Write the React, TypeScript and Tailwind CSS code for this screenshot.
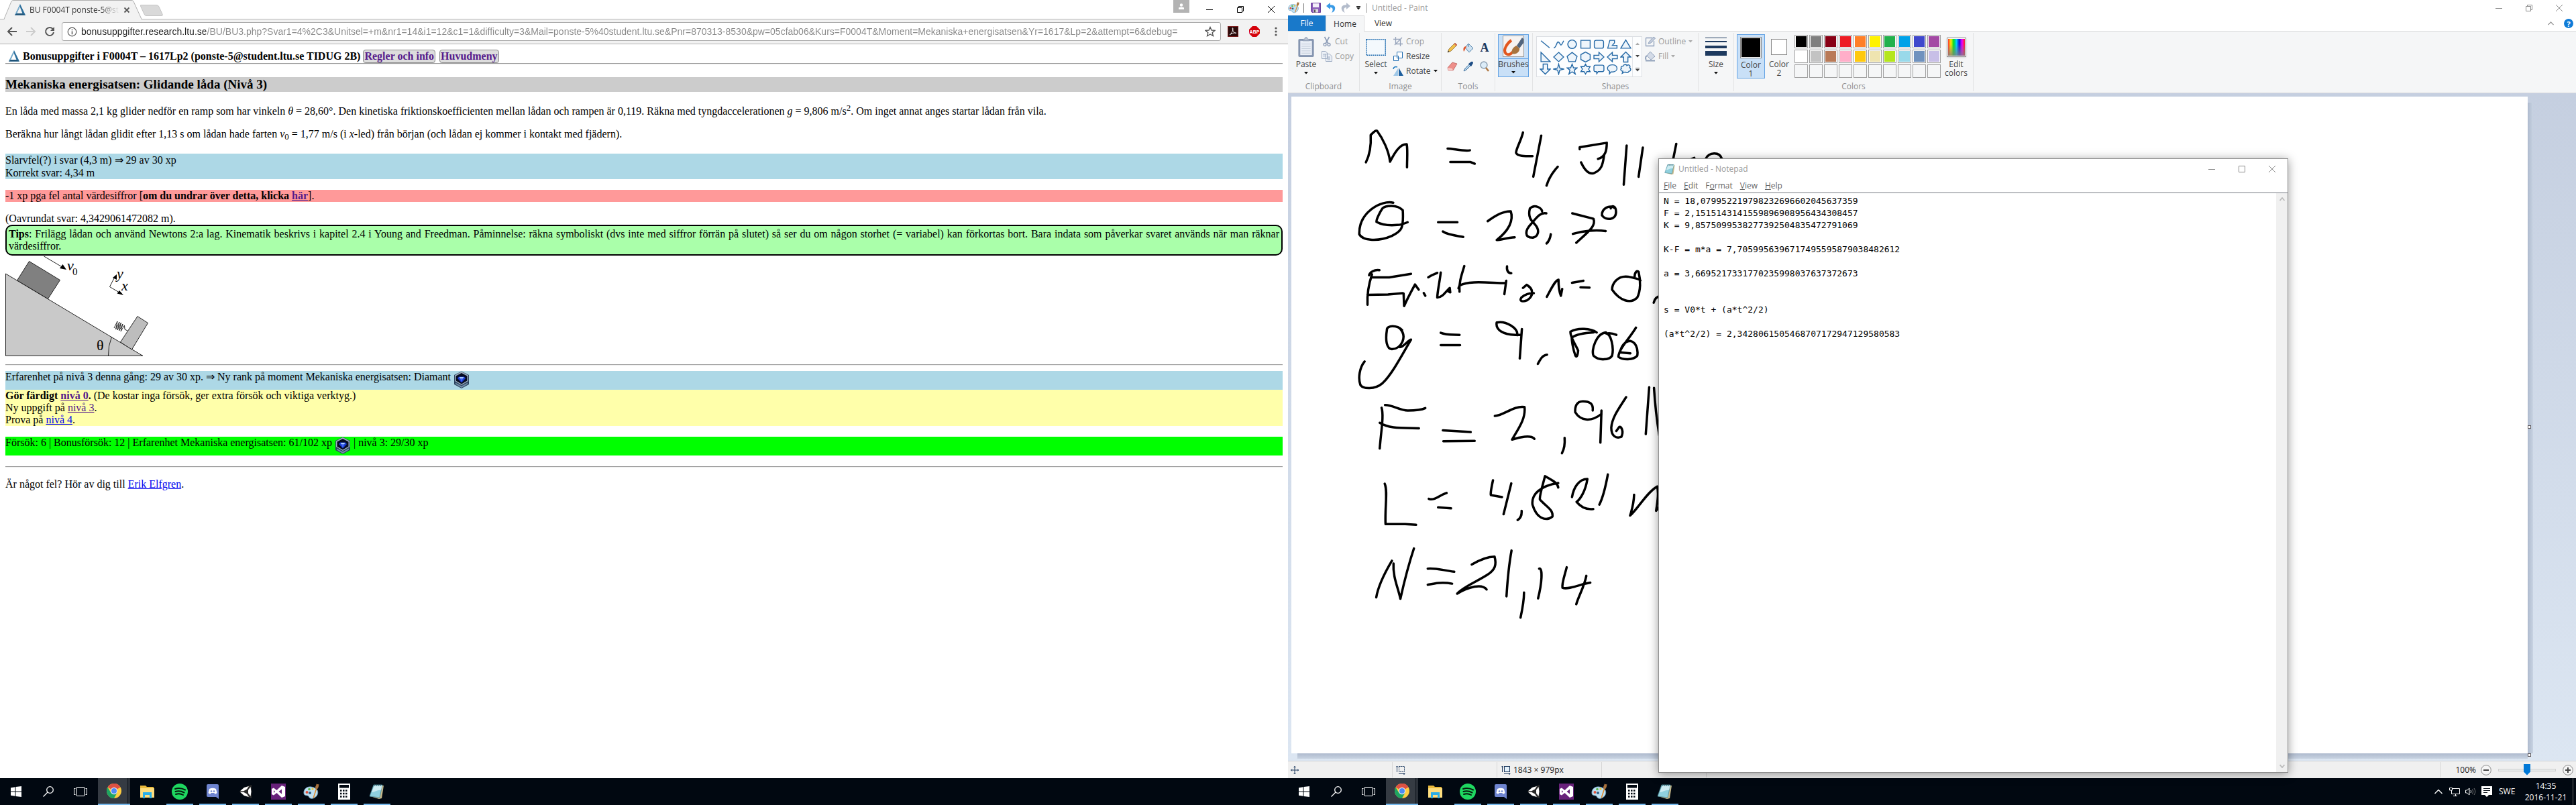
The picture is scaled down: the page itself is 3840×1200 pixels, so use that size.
import type { ReactNode } from "react";

const SERIF = "font-['Liberation_Serif','Times_New_Roman',serif]";
const UI = "font-['Open_Sans','Segoe_UI',sans-serif]";

/* ---------- shared icons ---------- */

function LtuLogo() {
  return (
    <svg viewBox="0 0 16 17" className="h-[17px] w-4 shrink-0" aria-hidden="true">
      <path d="M8 0 L16 16.5 L0 16.5 Z M7.6 4 L3 14 L11.5 14 Z" fill="#2d6f9c" fillRule="evenodd" />
      <path d="M8 0 L0 16.5 L3 14 L7.6 4 Z" fill="#7fb2d2" />
      <path d="M0 16.5 L3 14 L11.5 14 L16 16.5 Z" fill="#1f5378" />
    </svg>
  );
}

function RankIcon() {
  return (
    <svg viewBox="0 0 24 26" className="h-[26px] w-6" role="img" aria-label="Diamant">
      <path d="M12 0.500 L23 6 V20 L12 26 L1 20 V6 Z" fill="#2d4560" />
      <path d="M12 1 L22 6.500 V15 L12 21 L2 15 V6.500 Z" fill="#a3b3c4" />
      <path d="M12 3 L20.500 7.500 V14.500 L12 19.500 L3.500 14.500 V7.500 Z" fill="#070d22" />
      <path d="M8 8.500 H16 L18 11 L12 17.500 L6 11 Z" fill="#1a3ad0" />
      <path d="M8.500 9 H15.500 L14 11.500 H10 Z" fill="#a9ccff" />
      <path d="M10 11.500 H14 L12 16.500 Z" fill="#4368f5" />
      <path d="M3 17.500 L12 22.500 L21 17.500 V19.500 L12 25 L3 19.500 Z" fill="#7590aa" />
    </svg>
  );
}

function PaletteIcon({ className }: { className: string }) {
  return (
    <svg viewBox="0 0 24 24" className={className} aria-hidden="true">
      <path d="M12 5 C5 4 0 9 1 15 C2 19 6 17 8 19 C9 22 12 23 15 22 C21 20 23 14 21 10 C19 7 16 5.500 12 5 Z" fill="#bfe0f2" stroke="#5f94b5" strokeWidth="0.8" />
      <circle cx="5.500" cy="13" r="2" fill="#e0523c" />
      <circle cx="9" cy="8.500" r="1.800" fill="#5bb450" />
      <circle cx="14" cy="8" r="1.600" fill="#f0c63a" />
      <circle cx="10" cy="14" r="2" fill="#2f5f88" />
      <path d="M14.500 21 L19 7 L20.500 7.500 L16 21.500 Z" fill="#e08a2c" />
      <path d="M18.500 7.500 C17 4 20 3 19.500 0.500 C21 1 22 1.500 23.500 1 C23 4 23 6 21 8.200 Z" fill="#a9713c" />
    </svg>
  );
}

function NotepadIcon({ className }: { className: string }) {
  return (
    <svg viewBox="0 0 24 24" className={className} aria-hidden="true">
      <path d="M8 3 H22 L19 22 L15 23 L2 19 Z" fill="#c8b98a" />
      <path d="M7 2 H20 L16 21 L1 19 Z" fill="#8fd0de" stroke="#4b8896" strokeWidth="0.800" />
      <path d="M8 3 H19.500 L18 10 C13 9 9 13 4 13 Z" fill="#cdebf1" />
      <path d="M8 1.500 V4 M11 1.500 V4 M14 1.500 V4 M17 1.500 V4" stroke="#2e5963" strokeWidth="1" />
    </svg>
  );
}

function Caret({ color = "#111" }: { color?: string }) {
  return (
    <svg viewBox="0 0 6 4" className="h-1 w-1.5 shrink-0" aria-hidden="true">
      <path d="M0 0 H6 L3 3.500 Z" fill={color} />
    </svg>
  );
}

/* ---------- Chrome ---------- */

function BrowserChrome() {
  return (
    <header className={`${UI} text-[13px]`}>
      <div className="relative flex h-[29px] items-start justify-between border-b border-[#b4b4b4] bg-white">
        <svg viewBox="0 0 246 29" className="absolute left-0 top-0 h-[29px] w-[246px]" aria-hidden="true">
          <path d="M6 28.500 L17 2 Q18 0.500 20 0.500 H196 Q198 0.500 199 2 L211 28.500" fill="#f2f2f2" stroke="#b0b0b0" />
          <path d="M7 28 H210 V29 H7 Z" fill="#f2f2f2" />
          <path d="M210 7.500 H233 Q236 7.500 237 10 L242 21 Q243 23.500 241 23.500 H218 Q216 23.500 215 21 L209.500 9 Q209 7.500 210 7.500" fill="#d9d9d9" stroke="#c4c4c4" />
        </svg>
        <div className="relative ml-[22px] flex h-[29px] items-center">
          <LtuLogo />
          <span className="ml-1.5 w-[134px] overflow-hidden whitespace-nowrap bg-gradient-to-r from-[#333] from-80% to-transparent bg-clip-text text-[12px] text-transparent">
            BU F0004T ponste-5@stu
          </span>
          <button className="ml-1.5" aria-label="Close tab">
            <svg viewBox="0 0 10 10" className="h-2.5 w-2.5">
              <path d="M1.500 1.500 L8.500 8.500 M8.500 1.500 L1.500 8.500" stroke="#555" strokeWidth="1.800" />
            </svg>
          </button>
        </div>
        <div className="flex items-start">
          <button className="mr-[7px] flex h-[19px] w-6 items-center justify-center bg-[#b3b3b3]" aria-label="Profile">
            <svg viewBox="0 0 8 10" className="h-2.5 w-2">
              <circle cx="4" cy="2.500" r="2.200" fill="#fff" />
              <path d="M0 9 V7 Q0 5.500 4 5.500 Q8 5.500 8 7 V9 Z" fill="#fff" />
            </svg>
          </button>
          <button className="flex h-[27px] w-[46px] items-center justify-center" aria-label="Minimize">
            <svg viewBox="0 0 10 10" className="h-2.5 w-2.5"><path d="M0 5.500 H10" stroke="#000" /></svg>
          </button>
          <button className="flex h-[27px] w-[46px] items-center justify-center" aria-label="Restore">
            <svg viewBox="0 0 10 10" className="h-2.5 w-2.5"><path d="M0.500 2.500 H7.500 V9.500 H0.500 Z M2.500 2.500 V0.500 H9.500 V7.500 H7.500" fill="none" stroke="#000" /></svg>
          </button>
          <button className="mr-0.5 flex h-[27px] w-[46px] items-center justify-center" aria-label="Close">
            <svg viewBox="0 0 10 10" className="h-2.5 w-2.5"><path d="M0 0 L10 10 M10 0 L0 10" stroke="#000" /></svg>
          </button>
        </div>
      </div>
      <div className="flex h-[37px] items-center border-b border-[#b0b0b0] bg-[#f2f2f2] pl-2.5">
        <button className="flex w-4 justify-center" aria-label="Back">
          <svg viewBox="0 0 16 16" className="h-4 w-4"><path d="M15 8 H2 M8 2 L2 8 L8 14" fill="none" stroke="#555" strokeWidth="2" /></svg>
        </button>
        <button className="ml-3 flex w-4 justify-center" aria-label="Forward">
          <svg viewBox="0 0 16 16" className="h-4 w-4"><path d="M1 8 H14 M8 2 L14 8 L8 14" fill="none" stroke="#ccc" strokeWidth="2" /></svg>
        </button>
        <button className="ml-3 flex w-4 justify-center" aria-label="Reload">
          <svg viewBox="0 0 16 16" className="h-4 w-4">
            <path d="M13 4.500 A6 6 0 1 0 14 9" fill="none" stroke="#555" strokeWidth="2" />
            <path d="M15 1 V7 H9 Z" fill="#555" />
          </svg>
        </button>
        <div className="ml-2.5 flex h-7 min-w-0 flex-1 items-center rounded-[3px] border border-[#a8a8a8] bg-white pl-[7px] pr-[7px]">
          <svg viewBox="0 0 16 16" className="h-[15px] w-[15px] shrink-0" aria-hidden="true">
            <circle cx="8" cy="8" r="6.700" fill="none" stroke="#555" strokeWidth="1.300" />
            <path d="M8 7 V12 M8 4 V5.600" stroke="#555" strokeWidth="1.600" />
          </svg>
          <input
            aria-label="Address"
            className="ml-1.5 min-w-0 flex-1 bg-[linear-gradient(to_right,#222_186px,#888_186px)] bg-clip-text font-['Liberation_Sans',sans-serif] text-[14px] text-transparent outline-none"
            defaultValue="bonusuppgifter.research.ltu.se/BU/BU3.php?Svar1=4%2C3&Unitsel=+m&nr1=14&i1=12&c1=1&difficulty=3&Mail=ponste-5%40student.ltu.se&Pnr=870313-8530&pw=05cfab06&Kurs=F0004T&Moment=Mekaniska+energisatsen&Yr=1617&Lp=2&attempt=6&debug="
          />
          <button aria-label="Bookmark">
            <svg viewBox="0 0 16 16" className="h-4 w-4">
              <path d="M8 1.500 L10 6 L15 6.400 L11.200 9.700 L12.400 14.500 L8 12 L3.600 14.500 L4.800 9.700 L1 6.400 L6 6 Z" fill="none" stroke="#555" strokeWidth="1.400" />
            </svg>
          </button>
        </div>
        <button className="ml-2.5" aria-label="Adobe Acrobat">
          <svg viewBox="0 0 16 16" className="h-4 w-4">
            <rect x="0.500" y="0.500" width="15" height="15" fill="#2a0a0a" stroke="#7a1c1c" />
            <path d="M3 13 C6 11 8.500 6 7.800 3 C7.500 2 7 3 7.500 5 C8.500 9 11 11 13 10.500 C12 9 7 10 3 13" fill="none" stroke="#eee" />
          </svg>
        </button>
        <button className="ml-4" aria-label="Adblock Plus">
          <svg viewBox="0 0 16 16" className="h-4 w-4">
            <path d="M5 0 H11 L16 5 V11 L11 16 H5 L0 11 V5 Z" fill="#d4020b" />
            <text x="8" y="10.500" textAnchor="middle" fontSize="7" fontWeight="700" fill="#fff" fontFamily="Liberation Sans">ABP</text>
          </svg>
        </button>
        <button className="ml-4 mr-2.5 flex w-4 justify-center" aria-label="Menu">
          <svg viewBox="0 0 4 14" className="h-3.5 w-1">
            <circle cx="2" cy="2" r="1.600" fill="#555" /><circle cx="2" cy="7" r="1.600" fill="#555" /><circle cx="2" cy="12" r="1.600" fill="#555" />
          </svg>
        </button>
      </div>
    </header>
  );
}

function RampFigure() {
  return (
    <svg viewBox="8 381 216 152" className="block h-[152px] w-[216px]" role="img" aria-label="Låda på ramp med vinkel θ" fontFamily="Liberation Serif">
      <g stroke="#222" strokeWidth="1">
        <path d="M8.500 408 L213 530.500 H8.500 Z" fill="#c9c9c9" />
        <path d="M43.500 389.500 L89.500 417.500 L71.500 445.500 L25.500 418 Z" fill="#808080" />
        <path d="M205 471.500 L220.500 481.500 L196.500 521 L179.500 510 Z" fill="#bdbdbd" />
        <path d="M65.500 382 L96 400 M163.500 427.500 L172 411 M163.500 427.500 L182 438.500 M166.500 502 Q161 516 161.500 530" fill="none" />
        <path d="M170 489 L175 479 L172.500 491 L178 480 L175 492 L180.500 481 L177.500 493 L183 483 L180 494 L185.500 485 L186 491 L190 493" fill="none" />
      </g>
      <path d="M99 402 L89 400 L93.500 394 Z M174 409 L174 417 L168 414 Z M184 440 L174.500 437.500 L178 433 Z" fill="#000" />
      <g fontStyle="italic" fontSize="22" fill="#000">
        <text x="100" y="403">v</text>
        <text x="174" y="415">y</text>
        <text x="181" y="433">x</text>
      </g>
      <text x="108" y="410" fontSize="15">0</text>
      <text x="144" y="522" fontSize="22">θ</text>
    </svg>
  );
}

function Rule() {
  return <hr className="h-0.5 border-b border-t border-b-[#eee] border-t-[#9a9a9a]" />;
}

function BonusPage() {
  return (
    <main className={`${SERIF} min-h-0 flex-1 overflow-hidden bg-white px-2 pt-[7px] text-[16px] leading-[18px] text-black`}>
      <h1 className="flex h-[21px] items-center pl-[5px] text-[16px] font-bold">
        <LtuLogo />
        <span className="ml-[5px]">Bonusuppgifter i F0004T – 1617Lp2 (ponste-5@student.ltu.se TIDUG 2B)</span>
        <a href="#regler" className="ml-1 rounded-[4px] border border-[#888] bg-[#ddd] px-px leading-[18px] text-[#551a8b]">Regler och info</a>
        <a href="#meny" className="ml-1.5 rounded-[4px] border border-[#888] bg-[#ddd] px-px leading-[18px] text-[#551a8b]">Huvudmeny</a>
      </h1>
      <Rule />
      <h2 className="mt-[19px] bg-[#ccc] text-[19px] font-bold leading-[22px]">Mekaniska energisatsen: Glidande låda (Nivå 3)</h2>
      <p className="mt-5">
        En låda med massa 2,1 kg glider nedför en ramp som har vinkeln <i>θ</i> = 28,60°. Den kinetiska friktionskoefficienten mellan lådan och rampen är 0,119. Räkna med
        tyngdaccelerationen <i>g</i> = 9,806 m/s<sup className="text-[13px] leading-none">2</sup>. Om inget annat anges startar lådan från vila.
      </p>
      <p className="mt-4">
        Beräkna hur långt lådan glidit efter 1,13 s om lådan hade farten <i>v</i><sub className="text-[13px] leading-none">0</sub> = 1,77 m/s (i <i>x</i>-led) från början (och lådan ej kommer i kontakt med fjädern).
      </p>
      <div className="mt-5 bg-[#add8e6] leading-[19px]">
        <p>Slarvfel(?) i svar (4,3 m) ⇒ 29 av 30 xp</p>
        <p>Korrekt svar: 4,34 m</p>
      </div>
      <p className="mt-4 bg-[#f99]">
        -1 xp pga fel antal värdesiffror [<b>om du undrar över detta, klicka <a href="#har" className="text-[#551a8b] underline">här</a></b>].
      </p>
      <p className="mt-4">(Oavrundat svar: 4,3429061472082 m).</p>
      <p className="rounded-[10px] border-2 border-black bg-[#afa] p-[3px] text-justify">
        <b>Tips</b>: Frilägg lådan och använd Newtons 2:a lag. Kinematik beskrivs i kapitel 2.4 i Young and Freedman. Påminnelse: räkna symboliskt (dvs inte med siffror förrän på slutet) så ser du om någon storhet (= variabel) kan förkortas bort. Bara indata som påverkar svaret används när man räknar värdesiffror.
      </p>
      <RampFigure />
      <div className="h-2.5" />
      <Rule />
      <div className="mt-2 flex h-7 items-start bg-[#add8e6]">
        <span>Erfarenhet på nivå 3 denna gång: 29 av 30 xp. ⇒ Ny rank på moment Mekaniska energisatsen: Diamant</span>
        <span className="ml-1"><RankIcon /></span>
      </div>
      <div className="bg-[#ffa]">
        <p><b>Gör färdigt <a href="#niva0" className="text-[#551a8b] underline">nivå 0</a>.</b> (De kostar inga försök, ger extra försök och viktiga verktyg.)</p>
        <p>Ny uppgift på <a href="#niva3" className="text-[#551a8b] underline">nivå 3</a>.</p>
        <p>Prova på <a href="#niva4" className="text-[#00e] underline">nivå 4</a>.</p>
      </div>
      <div className="mt-4 flex h-7 items-start bg-[#0f0]">
        <span>Försök: 6 | Bonusförsök: 12 | Erfarenhet Mekaniska energisatsen: 61/102 xp</span>
        <span className="mx-1"><RankIcon /></span>
        <span>| nivå 3: 29/30 xp</span>
      </div>
      <div className="h-4" />
      <Rule />
      <p className="mt-4">Är något fel? Hör av dig till <a href="#erik" className="text-[#00e] underline">Erik Elfgren</a>.</p>
    </main>
  );
}

/* ---------- Paint ---------- */

function PaintTitle() {
  return (
    <div className="flex h-[23px] items-center justify-between bg-white">
      <div className="flex items-center">
        <PaletteIcon className="h-[17px] w-[17px]" />
        <span className="ml-1.5 h-3.5 w-px bg-[#777]" />
        <button className="ml-2.5" aria-label="Save">
          <svg viewBox="0 0 15 15" className="h-[15px] w-[15px]">
            <path d="M0.500 0.500 H14.500 V14.500 H2 L0.500 13 Z" fill="#8a5cb8" stroke="#6a3f98" />
            <rect x="3" y="1" width="9" height="6" fill="#f3eef8" /><rect x="4" y="9.500" width="7" height="5" fill="#ddd" /><rect x="5" y="10.500" width="2" height="4" fill="#555" />
          </svg>
        </button>
        <button className="ml-2" aria-label="Undo">
          <svg viewBox="0 0 15 15" className="h-[15px] w-[15px]">
            <path d="M0 5 L6 0 V3.200 C12 3 14 6 13 10 C12.500 12 11 14 8 15 C10.500 11.500 10.500 7 6 7 V10 Z" fill="#3a9be6" />
          </svg>
        </button>
        <button className="ml-1.5" aria-label="Redo">
          <svg viewBox="0 0 15 15" className="h-[15px] w-[15px]">
            <path d="M15 5 L9 0 V3.200 C3 3 1 6 2 10 C2.500 12 4 14 7 15 C4.500 11.500 4.500 7 9 7 V10 Z" fill="#b3bccb" />
          </svg>
        </button>
        <button className="ml-2 flex w-2 flex-col items-center gap-px" aria-label="Customize toolbar">
          <span className="h-px w-1.5 bg-black" />
          <Caret />
        </button>
        <span className="ml-2 h-3.5 w-px bg-[#999]" />
        <span className="ml-[7px] text-[#999]">Untitled - Paint</span>
      </div>
      <div className="flex">
        <button className="flex w-[45px] items-center justify-center" aria-label="Minimize">
          <svg viewBox="0 0 10 10" className="h-2.5 w-2.5"><path d="M0 5.500 H10" stroke="#888" /></svg>
        </button>
        <button className="flex w-[45px] items-center justify-center" aria-label="Restore">
          <svg viewBox="0 0 10 10" className="h-2.5 w-2.5"><path d="M0.500 2.500 H7.500 V9.500 H0.500 Z M2.500 2.500 V0.500 H9.500 V7.500 H7.500" fill="none" stroke="#888" /></svg>
        </button>
        <button className="mr-0.5 flex w-[46px] items-center justify-center" aria-label="Close">
          <svg viewBox="0 0 10 10" className="h-2.5 w-2.5"><path d="M0 0 L10 10 M10 0 L0 10" stroke="#888" /></svg>
        </button>
      </div>
    </div>
  );
}

function PaintTabs() {
  return (
    <div className="relative z-10 -mb-px flex h-6 items-stretch">
      <button className="mb-px w-14 bg-[#1979ca] text-white">File</button>
      <button className="w-[58px] border border-b-0 border-[#dadbdc] bg-[#f5f6f7] text-[#333]">Home</button>
      <button className="w-[56px] text-[#333]">View</button>
      <div className="ml-auto flex items-center gap-[15px] pr-1">
        <button aria-label="Collapse ribbon">
          <svg viewBox="0 0 9 6" className="h-1.5 w-[9px]"><path d="M0.500 5 L4.500 1 L8.500 5" fill="none" stroke="#999" strokeWidth="1.300" /></svg>
        </button>
        <button aria-label="Help" className="flex h-3.5 w-3.5 items-center justify-center rounded-full bg-[#0f7bd7] text-[11px] font-bold leading-none text-white">?</button>
      </div>
    </div>
  );
}

function Group({ label, className, children }: { label: string; className: string; children: ReactNode }) {
  return (
    <section aria-label={label || "Brushes"} className={`flex h-[87px] shrink-0 flex-col border-r border-[#e2e3e4] ${className}`}>
      <div className="flex h-[72px] items-start pt-0.5">{children}</div>
      <div className="text-center leading-[15px] text-[#8f8f8f]">{label}</div>
    </section>
  );
}

function Big({ icon, label, second, className }: { icon: ReactNode; label: string; second?: string; className: string }) {
  return (
    <button className={`flex h-[66px] shrink-0 flex-col items-center leading-[13px] text-[#444] ${className}`}>
      <span className="flex h-[38px] items-center justify-center">{icon}</span>
      <span>{label}</span>
      <span className="flex h-[13px] items-center">{second ?? <Caret />}</span>
    </button>
  );
}

function Small({ icon, label, dim, caret }: { icon: ReactNode; label: string; dim?: boolean; caret?: boolean }) {
  return (
    <button className={`flex h-[22px] items-center whitespace-nowrap ${dim ? "text-[#9a9a9a]" : "text-[#444]"}`}>
      <span className="mr-1 flex w-4 justify-center">{icon}</span>
      {label}
      {caret && <span className="ml-1"><Caret color={dim ? "#aaa" : "#111"} /></span>}
    </button>
  );
}

const SHAPES = [
  "M2 3 L14 13",
  "M1 13 C5 13 5 3 8 5 S10 14 15 3",
  "M8 2 A6 6 0 1 0 8.010 2 Z",
  "M1.500 2.500 H14.500 V13.500 H1.500 Z",
  "M4 2.500 H12 Q14.500 2.500 14.500 5 V11 Q14.500 13.500 12 13.500 H4 Q1.500 13.500 1.500 11 V5 Q1.500 2.500 4 2.500 Z",
  "M1.500 13.500 L4.500 2.500 H11 V6 L8 9.500 H14.500 V13.500 Z",
  "M8 2 L15 13.500 H1 Z",
  "M2 1.500 L15 14.500 H2 Z",
  "M8 1.500 L15 8 L8 14.500 L1 8 Z",
  "M8 1.500 L15 7 L12.500 14.500 H3.500 L1 7 Z",
  "M8 1 L14.500 4.500 V11.500 L8 15 L1.500 11.500 V4.500 Z",
  "M1 5.500 H8 V1.500 L15 8 L8 14.500 V10.500 H1 Z",
  "M15 5.500 H8 V1.500 L1 8 L8 14.500 V10.500 H15 Z",
  "M5 15 V8 H1 L8 1 L15 8 H11 V15 Z",
  "M5 1 V8 H1 L8 15 L15 8 H11 V1 Z",
  "M8 1 L9.500 6.500 L15 8 L9.500 9.500 L8 15 L6.500 9.500 L1 8 L6.500 6.500 Z",
  "M8 1 L10 6.300 H15 L11 9.500 L12.500 15 L8 11.800 L3.500 15 L5 9.500 L1 6.300 H6 Z",
  "M8 1 L10 4.500 H14.500 L12.300 8 L14.500 11.500 H10 L8 15 L6 11.500 H1.500 L3.700 8 L1.500 4.500 H6 Z",
  "M3 2.500 H13 Q15 2.500 15 4.500 V9.500 Q15 11.500 13 11.500 H7 L5 14.500 L4.500 11.500 H3 Q1 11.500 1 9.500 V4.500 Q1 2.500 3 2.500 Z",
  "M8 2 C16 2 17 11 9 12 L6 12 L4 14.500 L4 11 C-1 8 1 2 8 2 Z",
  "M4 4 C5 1 9 1 9.500 3 C12 1 15 3 13.500 6 C16 8 15 11 12.500 11 C11 14 8 13 7 12 L3 14 L4 11 C1 11 0 8 2 7 C0.500 5 2 3.500 4 4 Z",
];

const COLORS = [
  "bg-[#000000]", "bg-[#7f7f7f]", "bg-[#880015]", "bg-[#ed1c24]", "bg-[#ff7f27]", "bg-[#fff200]", "bg-[#22b14c]", "bg-[#00a2e8]", "bg-[#3f48cc]", "bg-[#a349a4]",
  "bg-[#ffffff]", "bg-[#c3c3c3]", "bg-[#b97a57]", "bg-[#ffaec9]", "bg-[#ffc90e]", "bg-[#efe4b0]", "bg-[#b5e61d]", "bg-[#99d9ea]", "bg-[#7092be]", "bg-[#c8bfe7]",
];
const EMPTY_SLOTS = Array.from({ length: 10 }, (_, i) => i);

const TOOLS: { name: string; art: ReactNode }[] = [
  { name: "Pencil", art: <><path d="M1 15 L3 10 L12 1 L15 4 L6 13 Z" fill="#f2c14a" stroke="#8a6a2c" strokeWidth="0.800" /><path d="M12 1 L15 4 L13.500 5.500 L10.500 2.500 Z" fill="#d86a5a" /><path d="M1 15 L2 12.500 L3.500 14 Z" fill="#333" /></> },
  { name: "Fill with color", art: <><path d="M8 2 L15 9 L9 15 L3 8 Z" fill="#cfe2f1" stroke="#4d7fa8" /><path d="M8 2 L8 7" stroke="#4d7fa8" /><path d="M4 6 C0 7 0 10 1 14 C3 12 3 9 5 7 Z" fill="#e0562b" /></> },
  { name: "Text", art: <text x="8" y="14" textAnchor="middle" fontSize="18" fontWeight="700" fontFamily="Liberation Serif" fill="#1e3a5f">A</text> },
  { name: "Eraser", art: <><path d="M1 10 L8 2 L15 4 L9 14 L2 14 Z" fill="#ee8f8a" stroke="#b95c58" strokeWidth="0.800" /><path d="M1 10 L7.500 11 L9 14 L2 14 Z" fill="#f8c9c5" /></> },
  { name: "Color picker", art: <><path d="M1 15 L3 11 L9 5 L11 7 L5 13 Z" fill="#b9d7ee" stroke="#3e6f9c" /><path d="M8 4 L9.500 3 L12 1 Q15 0 15 3 L13 6.500 L12 8 Z" fill="#1f4e86" /></> },
  { name: "Magnifier", art: <><circle cx="7" cy="6" r="5" fill="#dcecf8" stroke="#8a9db0" strokeWidth="1.400" /><path d="M10 10 L14 15" stroke="#b07a44" strokeWidth="2.500" /></> },
];

function Ribbon() {
  return (
    <div className="flex h-[93px] border-y border-[#dadbdc] bg-[#f5f6f7] pt-0.5">
      <Group label="Clipboard" className="w-[107px]">
        <Big
          className="ml-2 w-[38px]"
          label="Paste"
          icon={
            <svg viewBox="0 0 26 32" className="h-[31px] w-[26px]">
              <rect x="1" y="3" width="24" height="28" rx="2" fill="#8595b0" /><rect x="4" y="6" width="18" height="22" fill="#e9eef6" />
              <path d="M6 11 H20 M6 14.500 H20 M6 18 H20 M6 21.500 H20 M6 25 H20" stroke="#c2cbd9" /><path d="M8 6 V3.500 H10.500 Q11 0.500 13 0.500 Q15 0.500 15.500 3.500 H18 V6 Z" fill="#b6c0d0" stroke="#8190aa" strokeWidth="0.800" />
            </svg>
          }
        />
        <div className="ml-1">
          <Small dim label="Cut" icon={<svg viewBox="0 0 12 16" className="h-4 w-3"><path d="M2.500 1 L8 11 M9.500 1 L4 11" stroke="#8a9ab5" strokeWidth="1.600" /><circle cx="3" cy="12.500" r="2" fill="none" stroke="#8a9ab5" strokeWidth="1.300" /><circle cx="9" cy="12.500" r="2" fill="none" stroke="#8a9ab5" strokeWidth="1.300" /></svg>} />
          <Small dim label="Copy" icon={<svg viewBox="0 0 16 16" className="h-4 w-4"><path d="M0.500 0.500 H6 L8.500 3 V11.500 H0.500 Z M6.500 4.500 H12 L15.500 8 V15.500 H6.500 Z" fill="#eef2f8" stroke="#9aa9c0" /><path d="M2 5 H6 M2 7.500 H6 M8.500 9 H13 M8.500 11 H13 M8.500 13 H13" stroke="#9aa9c0" /></svg>} />
        </div>
      </Group>
      <Group label="Image" className="w-[122px]">
        <Big
          className="ml-1.5 w-9"
          label="Select"
          icon={<svg viewBox="0 0 30 25" className="h-[25px] w-[30px]"><rect x="0.750" y="0.750" width="28.500" height="23.500" fill="#f4f9fd" stroke="#1b69ae" strokeWidth="1.500" strokeDasharray="2 1" /></svg>}
        />
        <div className="ml-[7px]">
          <Small dim label="Crop" icon={<svg viewBox="0 0 14 14" className="h-3.5 w-3.5"><path d="M3.500 0 V10.500 H14 M0 3.500 H10.500 V14 M2 12 L13 1" fill="none" stroke="#96a3ba" strokeWidth="1.300" /></svg>} />
          <Small label="Resize" icon={<svg viewBox="0 0 14 14" className="h-3.5 w-3.5"><path d="M5.500 0.500 H13.500 V9.500 H5.500 Z M0.500 6.500 H7.500 V13.500 H0.500 Z" fill="#fff" stroke="#1f6cb0" /></svg>} />
          <Small caret label="Rotate" icon={<svg viewBox="0 0 16 16" className="h-4 w-4"><path d="M1 15 L8 4 V15 Z" fill="#9fc8e8" /><path d="M9 15 V3 L16 15 Z" fill="#1d5f9e" /><path d="M1 5 C1 2 4 1 7 2" fill="none" stroke="#1d7ac0" strokeWidth="1.500" /></svg>} />
        </div>
      </Group>
      <Group label="Tools" className="w-20">
        <div className="ml-2 mt-3 grid grid-cols-3 gap-x-2 gap-y-3">
          {TOOLS.map((t) => (
            <button key={t.name} aria-label={t.name}><svg viewBox="0 0 16 16" className="h-4 w-4 overflow-visible">{t.art}</svg></button>
          ))}
        </div>
      </Group>
      <Group label="" className="w-14">
        <button className="ml-1 flex h-16 w-[46px] flex-col items-center border border-[#62a2e4] bg-[#c9e0f7] leading-[13px] text-[#444]">
          <span className="flex h-[37px] w-full items-center justify-center border-b border-[#62a2e4]">
            <svg viewBox="0 0 32 32" className="h-8 w-8">
              <rect x="0.500" y="0.500" width="31" height="31" fill="#f6f3f2" stroke="#999" />
              <path d="M13 7 C6 12 0 22 5 27 C10 31 15 25 18 21" fill="none" stroke="#e2571f" strokeWidth="4" />
              <path d="M14 27 C12 21 17 16 21 15 L25 19 C26 24 20 29 14 27" fill="#a8743e" />
              <path d="M21 15 L29 3 L31 5 V11 L25 19 Z" fill="#51657e" />
            </svg>
          </span>
          <span className="mt-px">Brushes</span>
          <span className="flex h-[13px] items-center"><Caret /></span>
        </button>
      </Group>
      <Group label="Shapes" className="w-[247px]">
        <div className="ml-[5px] mt-[3px] flex h-[61px] w-[158px] border border-[#dcdfe3] bg-[#fcfdfe]">
          <div className="grid flex-1 grid-cols-7 content-between py-0.5 pl-0.5">
            {SHAPES.map((d) => (
              <svg key={d} viewBox="0 0 16 16" className="mx-auto h-[18px] w-[17px]" aria-hidden="true"><path d={d} fill="#eef5fb" stroke="#2267a5" strokeWidth="1.300" /></svg>
            ))}
          </div>
          <div className="flex w-3.5 flex-col items-center justify-around border-l border-[#e3e6ea]">
            <svg viewBox="0 0 6 4" className="h-1 w-1.5"><path d="M0 4 H6 L3 0.500 Z" fill="#aaa" /></svg>
            <Caret color="#444" />
            <span className="flex flex-col items-center gap-px"><span className="h-px w-1.5 bg-[#444]" /><Caret color="#444" /></span>
          </div>
        </div>
        <div className="ml-1">
          <Small dim caret label="Outline" icon={<svg viewBox="0 0 16 16" className="h-4 w-4"><path d="M1.500 2.500 H11 M1.500 2.500 V14.500 H13.500 V7" fill="none" stroke="#8fa0ba" strokeWidth="1.300" /><path d="M5 11 L6.500 8 L13 1 L15.500 3 L9 10 Z" fill="#c5cedd" stroke="#8fa0ba" /></svg>} />
          <Small dim caret label="Fill" icon={<svg viewBox="0 0 16 16" className="h-4 w-4"><path d="M8 1 L15 8 L9 13 L3 7 Z" fill="#d4dbe7" stroke="#8fa0ba" /><path d="M1 14.500 H15 M3 7 C0 9 1 12 2 13" fill="none" stroke="#8fa0ba" strokeWidth="2" /></svg>} />
        </div>
      </Group>
      <Group label="" className="w-[53px]">
        <Big
          className="mx-auto w-11"
          label="Size"
          icon={<svg viewBox="0 0 32 28" className="h-7 w-8"><path d="M0 0.500 H32" stroke="#1e3a5f" /><path d="M0 5 H32 V7 H0 Z M0 12 H32 V16 H0 Z M0 20 H32 V27 H0 Z" fill="#1e3a5f" /></svg>}
        />
      </Group>
      <Group label="Colors" className="w-[357px]">
        <Big className="ml-1 w-[42px] border border-[#62a2e4] bg-[#c9e0f7]" label="Color" second="1" icon={<span className="h-8 w-8 border border-[#888] bg-white p-px"><span className="block h-full bg-black" /></span>} />
        <Big className="w-[42px]" label="Color" second="2" icon={<span className="h-6 w-6 border border-[#888] bg-white" />} />
        <div className="ml-0.5 mt-px grid grid-cols-10 gap-0.5">
          {COLORS.map((c) => (
            <button key={c} aria-label="Color swatch" className="h-5 w-5 border border-[#a0a0a0] bg-white p-px"><span className={`block h-full ${c}`} /></button>
          ))}
          {EMPTY_SLOTS.map((n) => (
            <button key={n} aria-label="Empty swatch" className="h-5 w-5 border border-[#a0a0a0]" />
          ))}
        </div>
        <Big
          className="ml-0.5 w-[42px]"
          label="Edit"
          second="colors"
          icon={<span className="h-[29px] w-[29px] border border-[#888] bg-white p-px shadow-sm"><span className="block h-full bg-[linear-gradient(to_top,rgba(128,128,128,0.8),transparent_70%),linear-gradient(to_right,#f33,#fe0,#0d2,#0cf,#11d,#e0f,#f22)]" /></span>}
        />
      </Group>
    </div>
  );
}

const STROKES = [
  "M142 200 C155 180 162 150 160 120 C170 114 176 105 184 108 C205 130 228 165 233 198 C250 172 270 146 296 147 C300 165 297 190 297 215",
  "M450 160 C470 160 510 168 534 165 M460 199 H535 L552 204",
  "M734 113 C728 135 708 160 708 172 C712 182 740 182 770 182 M803 122 L773 242",
  "M865 213 C845 230 830 250 823 268",
  "M948 162 V156 L1050 143 C1050 165 1045 184 1017 190 M1040 180 C1035 200 1035 222 1000 232 C980 236 965 220 953 200",
  "M1125 151 L1114 265 M1186 157 L1170 242",
  "M1312 146 L1298 200 M1365 192 L1380 187 M1423 190 C1435 170 1475 168 1484 190",
  "M245 318 C200 310 115 345 117 410 C130 430 190 432 240 415 C275 402 285 395 281 340 C260 322 215 326 205 334 C195 345 180 368 182 374 C200 382 230 385 260 383 C275 383 290 378 299 375",
  "M414 375 H487 M432 402 C450 412 480 414 509 418",
  "M601 372 C630 355 660 342 688 343 C700 370 680 400 635 427 C650 427 675 420 703 419",
  "M806 343 C805 335 780 320 760 335 C752 360 765 370 780 382 C800 400 790 418 770 420 C740 420 740 400 765 380 C785 362 800 345 822 349",
  "M839 410 C837 420 833 430 823 437",
  "M920 349 L1000 365 C1010 385 985 400 935 435 M922 409 C960 400 1010 396 1046 401",
  "M1083 335 C1060 322 1030 335 1032 355 C1045 370 1085 370 1085 345 C1085 325 1065 325 1065 335",
  "M193 515 C175 512 155 522 154 530 M165 527 C155 550 146 585 148 616 M165 536 H230 L312 526 M148 587 L225 586 L281 582",
  "M284 583 L286 620 C300 595 318 570 327 557 L341 572 M360 582 L366 590",
  "M377 536 C390 528 405 526 411 523 M424 522 C420 550 412 575 411 595 C430 595 440 580 458 567 L460 580 L448 575",
  "M513 503 C500 535 492 555 495 578 M491 568 L495 560 C530 545 600 552 668 553 M671 546 L664 585 M674 504 C672 518 680 524 690 524",
  "M734 567 L748 558 C775 570 775 590 750 603 C725 610 722 603 728 595 C745 583 760 583 775 582",
  "M824 593 C840 570 855 545 868 543 C868 560 872 580 877 590 L882 570",
  "M919 552 L962 546 M951 565 L985 566",
  "M1155 535 C1155 520 1165 515 1170 520 C1178 545 1178 575 1165 595 C1140 615 1100 605 1070 572 C1070 555 1090 530 1130 534 C1150 537 1170 540 1177 545",
  "M1227 610 C1230 600 1238 592 1252 591",
  "M278 690 C260 675 220 675 221 690 C215 720 220 745 240 746 C275 745 300 710 270 685 M270 740 C285 740 300 720 312 718 C280 760 240 820 205 845 C175 865 130 862 121 850 C112 830 118 800 137 782",
  "M424 698 C445 705 470 703 495 704 M424 734 H497",
  "M712 705 C718 685 670 662 635 668 C630 690 660 703 705 704 H728 M730 687 L722 773",
  "M825 762 C808 763 800 775 790 789",
  "M1012 697 C990 685 940 682 913 695 C912 712 935 735 942 750 C940 768 935 770 932 765 C922 745 918 720 918 712 C940 700 980 698 1000 697",
  "M1047 697 C1010 700 990 750 1000 765 C1020 780 1060 778 1070 765 C1078 740 1065 700 1047 700 C1060 698 1075 700 1086 704",
  "M1160 683 C1140 710 1095 745 1094 768 C1110 778 1150 778 1165 765 C1170 740 1155 725 1140 722 C1120 722 1105 735 1100 755 L1139 758",
  "M214 909 C240 908 270 925 300 925 C330 925 355 922 366 918 M201 917 C210 940 200 980 194 1036 M194 961 C230 978 270 976 342 977",
  "M432 983 L537 988 M434 1015 L552 1014",
  "M628 941 C660 940 700 910 740 915 C745 950 715 980 693 1010 C720 1003 765 995 777 1008",
  "M891 1005 C893 1025 888 1040 881 1050",
  "M997 925 C1000 905 985 898 960 898 C935 898 930 915 931 930 C950 955 990 960 1030 935 M1030 925 L1026 1019",
  "M1123 886 C1095 920 1070 945 1067 975 C1067 1000 1085 1008 1105 1002 C1115 985 1105 972 1097 973 L1086 985",
  "M1210 857 L1197 994 M1228 859 C1232 910 1240 960 1248 998",
  "M213 1139 C225 1160 213 1210 216 1257 H290 L331 1259",
  "M379 1183 C400 1190 420 1172 446 1166 M414 1208 L463 1211",
  "M621 1129 C615 1150 611 1165 613 1172 L655 1178 M690 1138 L661 1228",
  "M729 1218 C730 1230 725 1240 714 1245",
  "M867 1150 C865 1135 835 1125 817 1117 C810 1140 795 1175 798 1185 C820 1205 850 1215 845 1235 C820 1250 785 1240 770 1200 C765 1170 800 1145 867 1137",
  "M919 1178 C925 1150 945 1125 977 1125 C970 1160 950 1185 936 1192 C955 1210 975 1215 999 1213",
  "M1054 1112 C1045 1150 1035 1180 1022 1200",
  "M1153 1171 C1152 1195 1145 1215 1138 1232 C1170 1210 1200 1165 1240 1147 C1248 1170 1240 1195 1236 1218 L1250 1205",
  "M181 1471 C190 1430 220 1390 240 1364 M246 1372 C243 1410 262 1440 272 1475 C285 1430 305 1370 323 1328",
  "M375 1387 C410 1385 430 1392 475 1396 M375 1434 C400 1430 430 1425 467 1431",
  "M541 1375 C570 1362 600 1352 627 1352 C635 1375 630 1390 600 1405 C560 1425 510 1440 486 1460 C530 1440 580 1430 597 1448",
  "M691 1334 C680 1380 675 1430 672 1468",
  "M738 1457 C738 1480 732 1505 725 1530",
  "M795 1387 C810 1385 805 1430 791 1474",
  "M899 1383 C890 1410 880 1430 883 1443 C905 1450 960 1430 988 1428 M973 1408 C965 1440 945 1465 935 1491",
];

function PaintCanvas() {
  return (
    <div className="min-h-0 flex-1 bg-gradient-to-b from-[#c5cfe0] to-[#dce6f2] pb-[11px] pl-[5px] pr-[72px] pt-[5px]">
      <div className="relative h-full">
        <div className="absolute -bottom-2 left-[9px] right-0 h-2 bg-gradient-to-b from-[#aebace] to-[#c8d3e2]" />
        <div className="absolute -right-2 bottom-0 top-[9px] w-2 bg-gradient-to-r from-[#aebace] to-[#c8d3e2]" />
        <div className="h-full bg-white">
          <svg
            viewBox="0 8 1568 1560"
            preserveAspectRatio="none"
            className="ml-[55px] h-[796px] w-[620px]"
            role="img"
            aria-label="Pen strokes on the canvas"
            fill="none"
            stroke="#000"
            strokeWidth="3.500"
            strokeLinecap="round"
            strokeLinejoin="round"
          >
            {STROKES.map((d) => <path key={d} d={d} vectorEffect="non-scaling-stroke" />)}
          </svg>
        </div>
        <span className="absolute -right-[5px] top-1/2 h-[5px] w-[5px] border border-[#5a5457] bg-white" />
        <span className="absolute -bottom-[5px] -right-[5px] h-[5px] w-[5px] border border-[#5a5457] bg-white" />
      </div>
    </div>
  );
}

function ZoomButton({ label, plus }: { label: string; plus?: boolean }) {
  return (
    <button aria-label={label}>
      <svg viewBox="0 0 16 16" className="h-4 w-4">
        <circle cx="8" cy="8" r="7.300" fill="#f6f6f6" stroke="#8a8a8a" />
        <path d={plus ? "M4 8 H12 M8 4 V12" : "M4 8 H12"} stroke="#444" strokeWidth="2" />
      </svg>
    </button>
  );
}

function PaintStatus() {
  const cell = "flex w-[156px] items-center border-r border-[#d7d7d7]";
  return (
    <footer className="flex h-[26px] items-stretch border-t border-[#d0d3d7] bg-[#f0f0f0] py-px text-[#222]">
      <div className={`${cell} pl-1`}>
        <svg viewBox="0 0 12 12" className="h-3 w-3" aria-hidden="true"><path d="M6 0 V12 M0 6 H12 M4.500 2 L6 0.500 L7.500 2 M4.500 10 L6 11.500 L7.500 10 M2 4.500 L0.500 6 L2 7.500 M10 4.500 L11.500 6 L10 7.500" fill="none" stroke="#1e3a5f" /></svg>
      </div>
      <div className={`${cell} pl-[5px]`}>
        <svg viewBox="0 0 14 14" className="h-3.5 w-3.5" aria-hidden="true"><rect x="4.500" y="1.500" width="8" height="8" fill="none" stroke="#1e3a5f" strokeDasharray="2 1" /><path d="M1.500 1 V10 M0 2.500 L1.500 1 L3 2.500 M4 12.500 H13 M11.500 11 L13 12.500 L11.500 14" fill="none" stroke="#1e3a5f" /></svg>
      </div>
      <div className={`${cell} gap-1 pl-1.5`}>
        <svg viewBox="0 0 14 14" className="h-3.5 w-3.5" aria-hidden="true"><rect x="4.500" y="1.500" width="8" height="8" fill="#e3f0fa" stroke="#1e3a5f" /><path d="M1.500 1 V10 M0 2.500 L1.500 1 L3 2.500 M4 12.500 H13 M11.500 11 L13 12.500 L11.500 14" fill="none" stroke="#1e3a5f" /></svg>
        <span>1843 × 979px</span>
      </div>
      <div className={cell} />
      <div className="flex-1" />
      <div className="flex items-center border-l border-[#d7d7d7] pl-[21px] pr-1">
        <span className="mr-[7px]">100%</span>
        <ZoomButton label="Zoom out" />
        <input
          type="range"
          aria-label="Zoom"
          defaultValue={50}
          className="mx-2.5 h-[17px] w-[86px] appearance-none bg-transparent [&::-webkit-slider-runnable-track]:h-1 [&::-webkit-slider-runnable-track]:border [&::-webkit-slider-runnable-track]:border-[#d0d0d0] [&::-webkit-slider-runnable-track]:bg-[#e7eaea] [&::-webkit-slider-thumb]:-mt-2 [&::-webkit-slider-thumb]:h-[17px] [&::-webkit-slider-thumb]:w-2.5 [&::-webkit-slider-thumb]:appearance-none [&::-webkit-slider-thumb]:bg-[#0078d7] [&::-webkit-slider-thumb]:[clip-path:polygon(0_0,100%_0,100%_70%,50%_100%,0_70%)]"
        />
        <ZoomButton label="Zoom in" plus />
      </div>
    </footer>
  );
}

/* ---------- Notepad ---------- */

const NOTES = `N = 18,079952219798232696602045637359
F = 2,1515143141559896908956434308457
K = 9,8575099538277392504835472791069

K-F = m*a = 7,7059956396717495595879038482612

a = 3,6695217331770235998037637372673


s = V0*t + (a*t^2/2)

(a*t^2/2) = 2,3428061505468707172947129580583`;

const MENUS = [
  { pre: "", key: "F", post: "ile" },
  { pre: "", key: "E", post: "dit" },
  { pre: "F", key: "o", post: "rmat" },
  { pre: "", key: "V", post: "iew" },
  { pre: "", key: "H", post: "elp" },
];

function Notepad() {
  return (
    <section aria-label="Notepad" className="absolute left-[552px] top-[236px] flex h-[916px] w-[939px] flex-col border border-[#8f8f8f] bg-white shadow-[0_2px_14px_rgba(0,0,0,0.4)]">
      <div className="flex h-[30px] items-center pl-2 text-[#999]">
        <NotepadIcon className="h-[17px] w-[17px]" />
        <span className="ml-1">Untitled - Notepad</span>
        <div className="ml-auto flex">
          <button className="flex w-[45px] items-center justify-center" aria-label="Minimize"><svg viewBox="0 0 10 10" className="h-2.5 w-2.5"><path d="M0 5.500 H10" stroke="#888" /></svg></button>
          <button className="flex w-[45px] items-center justify-center" aria-label="Maximize"><svg viewBox="0 0 10 10" className="h-2.5 w-2.5"><path d="M0.500 0.500 H9.500 V9.500 H0.500 Z" fill="none" stroke="#888" /></svg></button>
          <button className="flex w-[46px] items-center justify-center" aria-label="Close"><svg viewBox="0 0 10 10" className="h-2.5 w-2.5"><path d="M0 0 L10 10 M10 0 L0 10" stroke="#888" /></svg></button>
        </div>
      </div>
      <nav className="flex h-5 items-center gap-[11px] border-b border-[#eee] pl-[7px] text-[#666]">
        {MENUS.map((m) => (
          <button key={m.key}>{m.pre}<u>{m.key}</u>{m.post}</button>
        ))}
      </nav>
      <div className="flex min-h-0 flex-1 border-t border-[#828790]">
        <textarea
          aria-label="Text editor"
          className="min-w-0 flex-1 resize-none overflow-hidden bg-white pl-[7px] pt-[3px] font-['DejaVu_Sans_Mono',monospace] text-[13px] leading-[18px] text-black outline-none"
          defaultValue={NOTES}
        />
        <div className="flex w-[17px] flex-col items-center justify-between bg-[#f0f0f0] py-1.5" aria-hidden="true">
          <svg viewBox="0 0 8 6" className="h-1.5 w-2"><path d="M0.500 5 L4 1 L7.500 5" fill="none" stroke="#bbb" strokeWidth="1.800" /></svg>
          <svg viewBox="0 0 8 6" className="h-1.5 w-2"><path d="M0.500 1 L4 5 L7.500 1" fill="none" stroke="#bbb" strokeWidth="1.800" /></svg>
        </div>
      </div>
    </section>
  );
}

/* ---------- Taskbar ---------- */

const APPS: { name: string; running: boolean; art: ReactNode }[] = [
  {
    name: "File Explorer", running: false,
    art: <><path d="M2 3 H10 L12 5 H22 V21 H2 Z" fill="#e9b93c" /><path d="M2 7 H23 V21 H2 Z" fill="#fddd7e" /><path d="M6 22 V13 H19 V22 H16 V17 H9 V22 Z" fill="#2aaee8" /></>,
  },
  {
    name: "Spotify", running: true,
    art: <><circle cx="12" cy="12" r="12" fill="#1ed760" /><path d="M5 8 Q12.500 5.500 20 9.500 M5.500 12 Q12 10 18.500 13.500 M6 16 Q12 14 17 17" fill="none" stroke="#061a0d" strokeWidth="2" strokeLinecap="round" /></>,
  },
  {
    name: "Discord", running: true,
    art: <><path d="M5 1 H19 Q21 1 21 3 V23 L17 20 H5 Q3 20 3 18 V3 Q3 1 5 1 Z" fill="#6f85d0" /><path d="M7 8 Q12 5.500 17 8 L18.500 14 Q17 15.500 15 15.500 L14.500 14 H9.500 L9 15.500 Q7 15.500 5.500 14 Z" fill="#fff" /><circle cx="10" cy="11.500" r="1.300" fill="#6f85d0" /><circle cx="14" cy="11.500" r="1.300" fill="#6f85d0" /></>,
  },
  {
    name: "Unity", running: true,
    art: <><path d="M3 12 L9 6 L21 2 V22 L9 18 Z" fill="#2a2a2a" /><path d="M4 11.300 L10 6 L17 4 L14 8.500 L9 11.300 Z M4 12.700 L10 18 L17 20 L14 15.500 L9 12.700 Z M19.500 5 L20.500 12 L19.500 19 L16 14.500 V9.500 Z" fill="#fff" /></>,
  },
  {
    name: "Visual Studio", running: true,
    art: <><path d="M1 0 H23 V24 H1 Z" fill="#68217a" /><path d="M17 3 L22 5 V19 L17 21 L9.500 14 L5 17.500 L2 16 V8 L5 6.500 L9.500 10 Z M5 10 V14 L7 12 Z M17 8.500 L12.500 12 L17 15.500 Z" fill="#fff" fillRule="evenodd" /></>,
  },
  {
    name: "Paint", running: true,
    art: <PaletteIcon className="h-6 w-6" />,
  },
  {
    name: "Calculator", running: true,
    art: <><rect x="3" y="0" width="18" height="24" fill="#fff" /><rect x="5" y="2" width="14" height="4.500" fill="#010811" /><path d="M6 10.500 H18 M6 15 H18 M6 19.500 H18" stroke="#010811" strokeWidth="2.500" strokeDasharray="2.500 1.500" /></>,
  },
  {
    name: "Notepad", running: true,
    art: <NotepadIcon className="h-6 w-6" />,
  },
];

function Taskbar({ children }: { children?: ReactNode }) {
  return (
    <nav aria-label="Taskbar" className={`${UI} flex h-10 bg-[#010811] text-[12px] text-white`}>
      <button className="flex w-12 items-center justify-center" aria-label="Start">
        <svg viewBox="0 0 16 16" className="h-4 w-4"><path d="M0 2.200 L6.500 1.300 V7.500 H0 Z M7.500 1.100 L16 0 V7.500 H7.500 Z M0 8.500 H6.500 V14.700 L0 13.800 Z M7.500 8.500 H16 V16 L7.500 14.900 Z" fill="#fff" /></svg>
      </button>
      <button className="flex w-12 items-center justify-center" aria-label="Search">
        <svg viewBox="0 0 16 16" className="h-4 w-4"><circle cx="10.500" cy="5.500" r="4.800" fill="none" stroke="#fff" strokeWidth="1.300" /><path d="M7 9 L0.500 15.500" stroke="#fff" strokeWidth="1.300" /></svg>
      </button>
      <button className="flex w-12 items-center justify-center" aria-label="Task view">
        <svg viewBox="0 0 20 16" className="h-4 w-5"><path d="M4.500 1.500 H15.500 V14.500 H4.500 Z M2.500 3.500 H0.500 V12.500 H2.500 M17.500 3.500 H19.500 V12.500 H17.500" fill="none" stroke="#fff" /></svg>
      </button>
      <button className="ml-0.5 flex w-12 border-b-2 border-[#76b9ed] bg-[#353b43]" aria-label="Chrome">
        <span className="flex h-full flex-1 items-center justify-center pl-1">
          <svg viewBox="0 0 24 24" className="h-[22px] w-[22px]">
            <circle cx="12" cy="12" r="12" fill="#ffcd40" />
            <path d="M12 12 L1.600 6 A12 12 0 0 1 22.400 6 Z" fill="#dd5144" />
            <path d="M12 0 A12 12 0 0 1 22.400 6 H12 Z" fill="#dd5144" />
            <path d="M1.600 6 A12 12 0 0 0 12 24 L17 15 L7 15 Z" fill="#1da462" />
            <circle cx="12" cy="12" r="5.600" fill="#f1f1f1" /><circle cx="12" cy="12" r="4.400" fill="#4c8bf5" />
          </svg>
        </span>
        <span className="h-full w-1 border-l border-[#10161e] bg-[#2a3038]" />
      </button>
      {APPS.map((a) => (
        <button key={a.name} aria-label={a.name} className="flex w-[49px] flex-col items-center justify-end">
          <svg viewBox="0 0 24 24" className="mb-1.5 h-6 w-6">{a.art}</svg>
          <span className={`h-0.5 w-10 ${a.running ? "bg-[#76b9ed]" : ""}`} />
        </button>
      ))}
      {children}
    </nav>
  );
}

function Tray() {
  return (
    <div className="ml-auto flex items-center">
      <button aria-label="Show hidden icons"><svg viewBox="0 0 12 8" className="h-2 w-3"><path d="M0.500 7 L6 1.500 L11.500 7" fill="none" stroke="#fff" strokeWidth="1.300" /></svg></button>
      <button className="ml-2.5" aria-label="Network"><svg viewBox="0 0 16 14" className="h-3.5 w-4"><path d="M4.500 2.500 H15.500 V10.500 H3.500 V5 M9.500 10.500 V13 M6 13.500 H12 M0.500 1.500 H4.500 V5 H0.500 Z" fill="none" stroke="#fff" /></svg></button>
      <button className="ml-2" aria-label="Volume"><svg viewBox="0 0 16 14" className="h-3.5 w-4"><path d="M0.500 5 H2.500 L6 2 V12 L2.500 9 H0.500 Z" fill="none" stroke="#fff" /><path d="M8 5 Q9.500 7 8 9" fill="none" stroke="#fff" /><path d="M10.500 3.500 Q13 7 10.500 10.500 M13 2 Q16.500 7 13 12" fill="none" stroke="#777" /></svg></button>
      <button className="ml-2" aria-label="Action center"><svg viewBox="0 0 16 16" className="h-4 w-4"><path d="M0 0 H16 V13 H11 L8 16 L5 13 H0 Z" fill="#fff" /><path d="M3 3.500 H13 M3 6.500 H13 M3 9.500 H9" stroke="#010811" /></svg></button>
      <button className="ml-2.5 w-6 text-center">SWE</button>
      <button className="ml-3 flex w-[68px] flex-col items-center leading-[17px]"><span>14:35</span><span>2016-11-21</span></button>
      <button className="ml-1.5 h-10 w-[5px] border-l border-[#666]" aria-label="Show desktop" />
    </div>
  );
}

export default function App() {
  return (
    <div className="grid h-screen grid-cols-2 overflow-hidden bg-white">
      <div className="flex min-h-0 min-w-0 flex-col">
        <BrowserChrome />
        <BonusPage />
        <Taskbar />
      </div>
      <div className="relative flex min-h-0 min-w-0 flex-col">
        <div className={`${UI} flex min-h-0 flex-1 flex-col text-[12px]`}>
          <PaintTitle />
          <PaintTabs />
          <Ribbon />
          <PaintCanvas />
          <PaintStatus />
          <Notepad />
        </div>
        <Taskbar><Tray /></Taskbar>
      </div>
    </div>
  );
}
